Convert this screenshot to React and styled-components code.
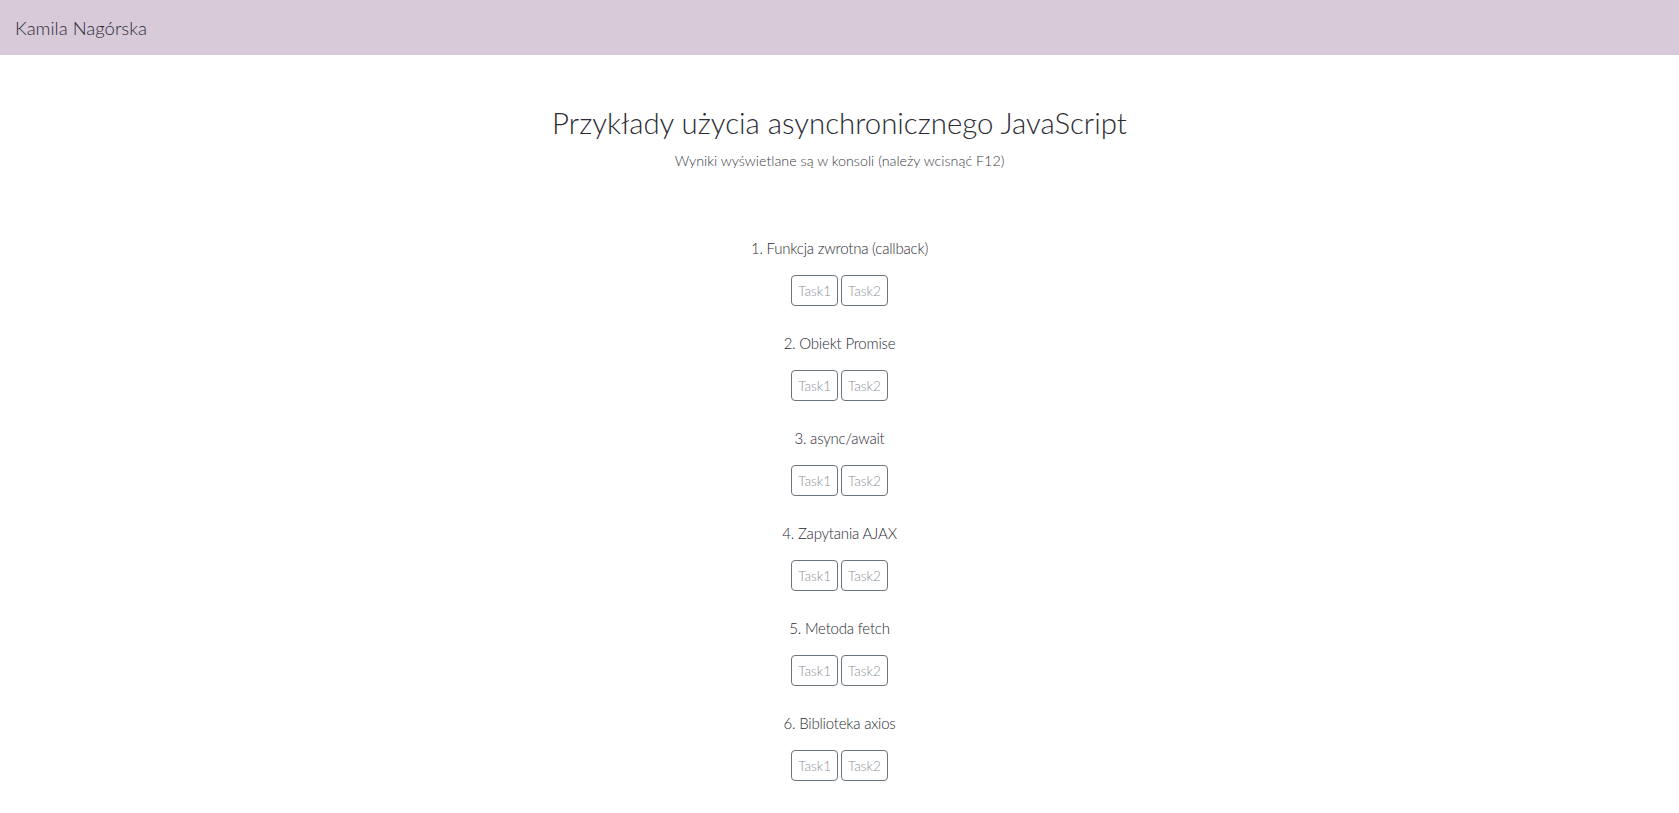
import React from "react";
import styled, { createGlobalStyle } from "styled-components";

const GlobalStyle = createGlobalStyle`
  body {
    margin: 0;
    background: #fff;
    font-family: "Lato", "Open Sans", sans-serif;
    font-weight: 300;
    color: #212529;
  }
`;

const sections = [
  "1. Funkcja zwrotna (callback)",
  "2. Obiekt Promise",
  "3. async/await",
  "4. Zapytania AJAX",
  "5. Metoda fetch",
  "6. Biblioteka axios",
];

export default function App() {
  return (
    <>
      <GlobalStyle />
      <NavBar>
        <Brand>Kamila Nagórska</Brand>
      </NavBar>
      <Main>
        <Title>Przykłady użycia asynchronicznego JavaScript</Title>
        <Lead>Wyniki wyświetlane są w konsoli (należy wcisnąć F12)</Lead>
        <List>
          {sections.map((name) => (
            <Section key={name}>
              <Heading>{name}</Heading>
              <Buttons>
                <TaskButton>Task1</TaskButton>
                <TaskButton>Task2</TaskButton>
              </Buttons>
            </Section>
          ))}
        </List>
      </Main>
    </>
  );
}

const NavBar = styled.nav`
  height: 55px;
  background-color: #d8cad9;
  display: flex;
  align-items: center;
  padding: 0 15px;
`;

const Brand = styled.span`
  font-size: 18.5px;
  color: #2b2b3a;
`;

const Main = styled.main`
  display: flex;
  flex-direction: column;
  align-items: center;
  padding-top: 50px;
`;

const Title = styled.h1`
  margin: 0;
  font-size: 29.4px;
  font-weight: 300;
  line-height: 1.2;
  color: #2b2b33;
`;

const Lead = styled.p`
  margin: 12px 0 0;
  font-size: 14.3px;
  color: #3a3a44;
`;

const List = styled.div`
  display: flex;
  flex-direction: column;
  align-items: center;
  gap: 28px;
  margin-top: 70px;
`;

const Section = styled.section`
  display: flex;
  flex-direction: column;
  align-items: center;
`;

const Heading = styled.h5`
  margin: 0 0 18px;
  font-size: 15px;
  font-weight: 300;
  letter-spacing: -0.2px;
  line-height: 1.2;
  color: #2b2b33;
`;

const Buttons = styled.div`
  display: flex;
  gap: 3px;
`;

const TaskButton = styled.button`
  height: 31px;
  padding: 0 6px;
  border: 1px solid #6c757d;
  border-radius: 4px;
  background: #fff;
  font-family: inherit;
  font-weight: 300;
  font-size: 13.5px;
  color: #8a9097;
  cursor: pointer;
`;
